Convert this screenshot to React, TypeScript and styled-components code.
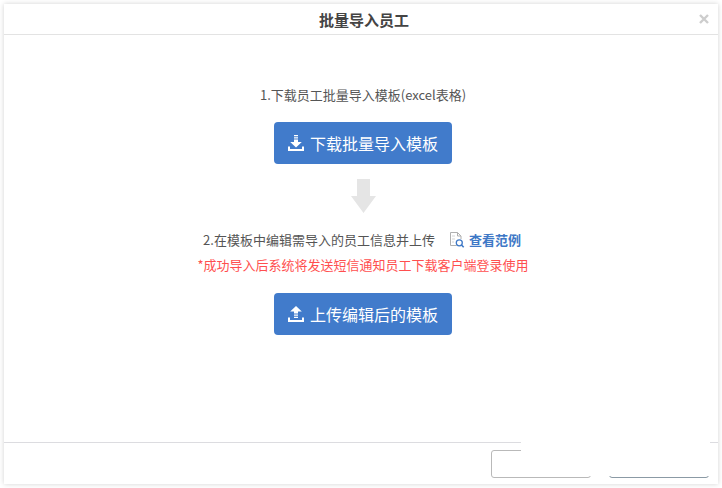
import React from "react";
import styled, { createGlobalStyle } from "styled-components";

const Global = createGlobalStyle`
  html, body { margin: 0; padding: 0; background: #fff; }
  body { font-family: "Noto Sans CJK SC", "Liberation Sans", sans-serif; }
`;

const Page = styled.div`
  width: 722px;
  height: 488px;
  padding: 4px;
  box-sizing: border-box;
  overflow: hidden;
`;

const Dialog = styled.div`
  position: relative;
  width: 714px;
  height: 480px;
  background: #fff;
  box-shadow: 0 0 5px rgba(0, 0, 0, 0.18);
  display: flex;
  flex-direction: column;
`;

const Header = styled.header`
  position: relative;
  height: 30px;
  flex: none;
  border-bottom: 1px solid #e3e3e3;
  display: flex;
  align-items: center;
  justify-content: center;
  padding-left: 6px;
  font-size: 15px;
  font-weight: 700;
  color: #444;
`;

const Close = styled.span`
  position: absolute;
  right: 9px;
  top: 10px;
  width: 10px;
  height: 10px;
  display: flex;
`;

const Body = styled.main`
  flex: 1;
  display: flex;
  flex-direction: column;
  align-items: center;
  padding: 50px 0 0 4px;
  color: #555;
  font-size: 13px;
`;

const Line = styled.div`
  height: 20px;
  line-height: 20px;
  display: flex;
  align-items: center;
  white-space: nowrap;
`;

const StepLine = styled(Line)`
  margin-left: -2px;
`;

const Notice = styled(Line)`
  margin-top: 5px;
  color: #ff4f4f;
`;

const Primary = styled.button<{ $top: number }>`
  width: 178px;
  height: 42px;
  border: 0;
  border-radius: 4px;
  background: #417bcb;
  color: #fff;
  font-family: inherit;
  font-size: 16px;
  display: flex;
  align-items: center;
  justify-content: center;
  gap: 6px;
  padding: 0;
  margin-top: ${(p) => p.$top}px;
`;

const ArrowBox = styled.div`
  margin-top: 15px;
  margin-bottom: 17px;
  height: 34px;
  display: flex;
`;

const ExampleLink = styled.a`
  margin-left: 14px;
  display: flex;
  align-items: center;
  gap: 4px;
  color: #3e78c6;
  font-weight: 700;
`;

const Footer = styled.footer`
  flex: none;
  height: 42px;
  border-top: 1px solid #dcdce0;
  display: flex;
  justify-content: flex-end;
  gap: 18px;
  padding: 7px 9px 5px 0;
  box-sizing: border-box;
`;

const FooterButton = styled.button<{ $dark?: boolean }>`
  width: 100px;
  height: 28px;
  box-sizing: border-box;
  background: #fff;
  border: 1px solid ${(p) => (p.$dark ? "#8b9aa5" : "#b9b9b9")};
  border-radius: 3px;
`;

const Patch = styled.div`
  position: absolute;
  left: 517px;
  top: 425px;
  width: 189px;
  height: 47px;
  background: #fff;
`;

const DownloadIcon = () => (
  <svg width="16" height="16" viewBox="0 0 16 16" fill="#fff">
    <path d="M6 0h4v1.2H6zM6 2.2h4v1.2H6zM6 4.4h4V7h3.8L8 12.4 2.2 7H6z" />
    <path d="M0 11.5h2v2.5h12v-2.5h2V16H0z" />
  </svg>
);

const UploadIcon = () => (
  <svg width="16" height="16" viewBox="0 0 16 16" fill="#fff">
    <path d="M8 0l5.8 5.4H10v2.2H6V5.4H2.2zM6 8.6h4v1.2H6zM6 10.8h4V12H6z" />
    <path d="M0 11.5h2v2.5h12v-2.5h2V16H0z" />
  </svg>
);

const ExampleIcon = () => (
  <svg width="16" height="16" viewBox="0 0 16 16" fill="none">
    <path d="M1.5.5h7l3.5 3.5v3M1.5.5v13h6" stroke="#b0b0b0" />
    <path d="M8.5.5V4H12" stroke="#b0b0b0" />
    <path d="M3 4h3M3 7h3M3 10h2" stroke="#d5d5d5" />
    <circle cx="10.3" cy="10.8" r="3" stroke="#3e78c6" strokeWidth="1.3" />
    <path d="M12.5 13l2.2 2.2" stroke="#3e78c6" strokeWidth="1.6" />
  </svg>
);

export default function App() {
  return (
    <Page>
      <Global />
      <Dialog>
        <Header>
          批量导入员工
          <Close>
            <svg width="10" height="10" viewBox="0 0 10 10">
              <path d="M1 1l8 8M9 1L1 9" stroke="#cdcdcd" strokeWidth="2.4" />
            </svg>
          </Close>
        </Header>
        <Body>
          <Line>1.下载员工批量导入模板(excel表格)</Line>
          <Primary $top={17}>
            <DownloadIcon />
            下载批量导入模板
          </Primary>
          <ArrowBox>
            <svg width="25" height="34" viewBox="0 0 25 34">
              <path d="M6 0h13v17h6L12.5 34 0 17h6z" fill="#e5e5e5" />
            </svg>
          </ArrowBox>
          <StepLine>
            2.在模板中编辑需导入的员工信息并上传
            <ExampleLink>
              <ExampleIcon />
              查看范例
            </ExampleLink>
          </StepLine>
          <Notice>*成功导入后系统将发送短信通知员工下载客户端登录使用</Notice>
          <Primary $top={18}>
            <UploadIcon />
            上传编辑后的模板
          </Primary>
        </Body>
        <Footer>
          <FooterButton />
          <FooterButton $dark />
        </Footer>
        <Patch />
      </Dialog>
    </Page>
  );
}
